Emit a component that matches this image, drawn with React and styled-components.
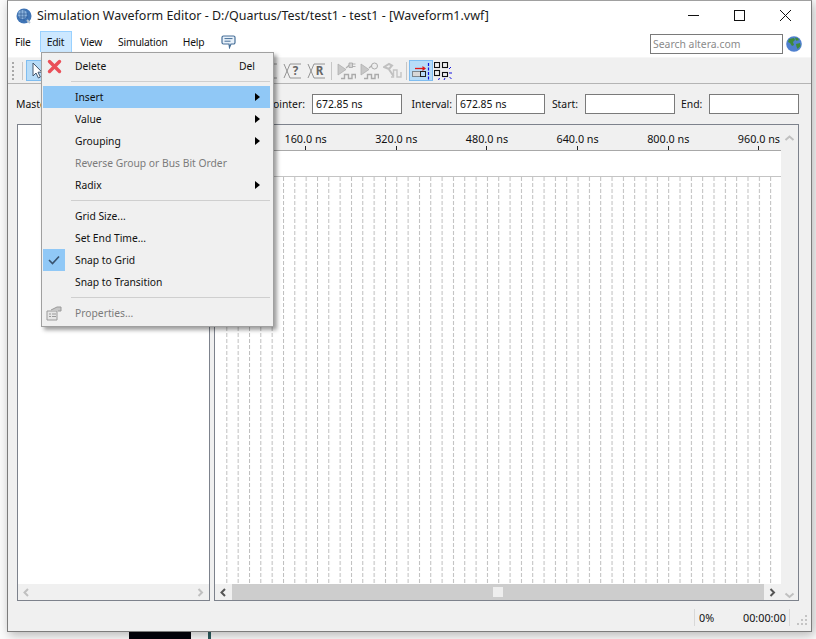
import React from "react";
import styled, { createGlobalStyle } from "styled-components";

const FONT = `"Noto Sans", "Open Sans", sans-serif`;

const GlobalStyle = createGlobalStyle`
  html, body {
    margin: 0;
    padding: 0;
    background: #fff;
  }
  body {
    font-family: ${FONT};
    overflow: hidden;
  }
`;

const Desktop = styled.div`
  position: relative;
  width: 816px;
  height: 639px;
  overflow: hidden;
  background: #fbfbfb;
`;

// bits of other windows peeking out below the editor
const BlackStrip = styled.div`
  position: absolute;
  left: 129px;
  top: 631px;
  width: 62px;
  height: 8px;
  background: #04040c;
`;
const TealLine = styled.div`
  position: absolute;
  left: 208px;
  top: 631px;
  width: 3px;
  height: 8px;
  background: #2c5c5e;
`;

const Window = styled.div`
  position: relative;
  box-sizing: border-box;
  margin-left: 7px;
  width: 805px;
  height: 632px;
  display: flex;
  flex-direction: column;
  background: #f0f0f0;
  border: 1px solid #7c7c7c;
  border-top-color: #a0a0a0;
  box-shadow: 2px 3px 10px rgba(0, 0, 0, 0.28);
`;

const TitleBar = styled.div`
  height: 29px;
  display: flex;
  align-items: center;
  padding: 0 3px 0 8px;
  background: #fff;
  flex: none;
`;

const Title = styled.div`
  margin-left: 5px;
  font-size: 12.47px;
  color: #1a1a1a;
  white-space: nowrap;
  flex: 1;
`;

const WinButton = styled.div`
  width: 46px;
  height: 29px;
  display: flex;
  align-items: center;
  justify-content: center;
  flex: none;
`;

const MenuBar = styled.div`
  height: 26px;
  flex: none;
  display: flex;
  align-items: flex-start;
  background: #fff;
  border-bottom: 1px solid #f6f6f6;
  padding: 1px 0 0 0;
  font-size: 10.3px;
  letter-spacing: -0.2px;
  color: #111;
`;

const MenuTitle = styled.div`
  box-sizing: border-box;
  height: 21px;
  display: flex;
  align-items: center;
  margin-left: ${(p) => p.$left}px;
  padding: 0 ${(p) => (p.$open ? 7 : 0)}px 0 ${(p) => (p.$open ? 6 : 0)}px;
  background: ${(p) => (p.$open ? "#cce8ff" : "transparent")};
  border: ${(p) => (p.$open ? "1px solid #99d1ff" : "none")};
  border-bottom: none;
`;

const SearchArea = styled.div`
  margin-left: auto;
  display: flex;
  align-items: center;
  gap: 3px;
  margin-top: 3px;
  padding-right: 9px;
  letter-spacing: 0;
`;

const SearchBox = styled.div`
  box-sizing: border-box;
  width: 133px;
  height: 20px;
  border: 1px solid #7a7a7a;
  background: #fff;
  color: #8a8a8a;
  font-size: 10.4px;
  line-height: 18px;
  padding-left: 2px;
`;

const Toolbar = styled.div`
  height: 25px;
  flex: none;
  display: flex;
  align-items: center;
  padding-left: 4px;
  border-bottom: 1px solid #b4b4b4;
`;

const Grip = styled.div`
  width: 2px;
  height: 18px;
  margin-right: 5px;
  background: repeating-linear-gradient(to bottom, #a8a8a8 0 2px, transparent 2px 4px);
`;

const ToolSep = styled.div`
  width: 1px;
  height: 18px;
  background: #c6c6c6;
  margin: 0 ${(p) => p.$gap || 3}px;
  flex: none;
`;

const ToolButton = styled.div`
  box-sizing: border-box;
  width: ${(p) => p.$w || 23}px;
  height: 21px;
  flex: none;
  display: flex;
  align-items: center;
  justify-content: center;
  background: ${(p) => (p.$on ? "#b7dcf8" : "transparent")};
  border: 1px solid ${(p) => (p.$on ? "#7fbdf0" : "transparent")};
`;

const FieldRow = styled.div`
  height: 40px;
  flex: none;
  display: flex;
  align-items: center;
  padding-left: 8px;
  font-size: 10.4px;
  color: #111;
`;

const FieldLabel = styled.span`
  width: ${(p) => p.$w}px;
  flex: none;
  margin-left: ${(p) => p.$gap || 0}px;
  margin-right: ${(p) => p.$after || 7}px;
  white-space: nowrap;
  text-align: right;
`;

const MasterLabel = styled(FieldLabel)`
  text-align: left;
`;

const FieldBox = styled.div`
  box-sizing: border-box;
  width: ${(p) => p.$w}px;
  height: 20px;
  flex: none;
  border: 1px solid #7a7a7a;
  background: #fff;
  line-height: 19px;
  padding-left: 3px;
`;

const Panes = styled.div`
  flex: none;
  height: 477px;
  display: flex;
  gap: 4px;
  padding: 0 12px 0 9px;
`;

const NamePane = styled.div`
  box-sizing: border-box;
  width: 193px;
  display: flex;
  flex-direction: column;
  border: 1px solid #7d828c;
  background: #fff;
`;

const PaneBody = styled.div`
  flex: 1;
`;

const HScroll = styled.div`
  height: 16px;
  flex: none;
  display: flex;
  align-items: center;
  justify-content: space-between;
  background: #f0f0f0;
`;

const ScrollButton = styled.div`
  width: 17px;
  height: 16px;
  flex: none;
  display: flex;
  align-items: center;
  justify-content: center;
  background: #f0f0f0;
`;

const Track = styled.div`
  flex: 1;
  height: 16px;
  background: #cdcdcd;
  display: flex;
  align-items: center;
  justify-content: center;
`;

const Thumb = styled.div`
  width: 10px;
  height: 10px;
  margin-left: -1px;
  background: #eeeeee;
`;

const WavePane = styled.div`
  box-sizing: border-box;
  flex: 1;
  display: flex;
  border: 1px solid #7d828c;
  background: #fff;
  min-width: 0;
`;

const WaveMain = styled.div`
  flex: 1;
  min-width: 0;
  display: flex;
  flex-direction: column;
`;

const VScroll = styled.div`
  width: 17px;
  flex: none;
  display: flex;
  flex-direction: column;
  align-items: center;
  justify-content: space-between;
  background: #f0f0f0;
  padding: 8px 0 0;
  box-sizing: border-box;
`;

const Ruler = styled.div`
  height: 26px;
  flex: none;
  display: flex;
  overflow: hidden;
  box-sizing: border-box;
  padding-left: 45.3px;
  background: #f0f0f0;
  border-bottom: 1px solid #a8a8a8;
`;

const RulerCell = styled.div`
  width: 90.67px;
  flex: none;
  display: flex;
  flex-direction: column;
  align-items: center;
  justify-content: flex-end;
  font-size: 10.8px;
  line-height: 14px;
  color: #111;
  white-space: nowrap;
  &::after {
    content: "";
    width: 1px;
    height: 4px;
    background: #222;
  }
`;

const WaveHead = styled.div`
  height: 26px;
  flex: none;
  box-sizing: border-box;
  background: #fff;
  border-bottom: 1px solid #c4c4c4;
`;

const GridArea = styled.div`
  flex: 1;
  min-height: 0;
  overflow: hidden;
`;

const StatusBar = styled.div`
  flex: 1;
  display: flex;
  align-items: center;
  justify-content: flex-end;
  font-size: 10.8px;
  color: #111;
  padding-top: 2px;
`;

const StatusCell = styled.div`
  box-sizing: border-box;
  height: 17px;
  line-height: 17px;
  width: ${(p) => p.$w}px;
  padding-left: ${(p) => p.$pad}px;
  border-left: ${(p) => (p.$sep ? "1px solid #d8d8d8" : "none")};
  border-right: ${(p) => (p.$end ? "1px solid #d8d8d8" : "none")};
  white-space: nowrap;
`;

const SizeGrip = styled.svg`
  width: 21px;
  height: 17px;
  flex: none;
  margin-top: 6px;
`;

const Menu = styled.div`
  position: absolute;
  left: 33px;
  top: 51px;
  box-sizing: border-box;
  width: 233px;
  height: 275px;
  padding: 2px 3px 0 1px;
  background: #f0f0f0;
  border: 1px solid #a0a0a0;
  box-shadow: 3px 3px 4px rgba(0, 0, 0, 0.38);
  font-size: 10.3px;
  z-index: 5;
`;

const Row = styled.div`
  height: 22px;
  display: flex;
  align-items: center;
  background: ${(p) => (p.$active ? "#90c8f6" : "transparent")};
  color: ${(p) => (p.$disabled ? "#7b7b7b" : "#111")};
`;

const RowIcon = styled.div`
  width: 22px;
  height: 22px;
  flex: none;
  margin-right: 10px;
  display: flex;
  align-items: center;
  justify-content: center;
  background: ${(p) => (p.$checked ? "#90c8f6" : "transparent")};
`;

const RowText = styled.div`
  flex: 1;
  white-space: nowrap;
`;

const RowKey = styled.div`
  margin-right: 15px;
`;

const RowArrow = styled.div`
  width: 0;
  height: 0;
  margin-right: 10px;
  border-left: 5px solid #000;
  border-top: 4px solid transparent;
  border-bottom: 4px solid transparent;
`;

const MenuSep = styled.div`
  height: 1px;
  margin: 4px 0 4px 28px;
  background: #cfcfcf;
`;

const AppIcon = () => (
  <svg width="16" height="16" viewBox="0 0 16 16">
    <circle cx="8" cy="8" r="7.5" fill="#3f74b5" />
    <circle cx="6.5" cy="6.5" r="4.5" fill="#8db4de" />
    <path d="M2 6h10M2 9h10M5 2v10M8 2v11" stroke="#2f5a94" strokeWidth="0.7" />
    <path d="M11 12l3 3" stroke="#b8c4d0" strokeWidth="2" />
  </svg>
);

const Globe = () => (
  <svg width="16" height="16" viewBox="0 0 16 16">
    <circle cx="8" cy="8" r="7.8" fill="#4f80cf" />
    <path d="M3 3l5-1 1 2-2 2 1 3-2 1-2-3-2-1z" fill="#3f8a3a" />
    <path d="M10 8l4-1 .6 3-3 3-1-2z" fill="#3f8a3a" />
    <path d="M9 1.5l3 .8 1 2-3 .4z" fill="#3f8a3a" />
  </svg>
);

const Chevron = ({ dir, color = "#c0c0c0" }) => {
  const paths = {
    left: "M6 2L2.5 5.5 6 9",
    right: "M2.5 2L6 5.5 2.5 9",
    up: "M1.5 7L5.5 3.5 9.5 7",
    down: "M1.5 3.5L5.5 7 9.5 3.5",
  };
  const horizontal = dir === "left" || dir === "right";
  return (
    <svg width={horizontal ? 9 : 11} height={horizontal ? 11 : 10} viewBox={horizontal ? "0 0 9 11" : "0 0 11 10"}>
      <path d={paths[dir]} fill="none" stroke={color} strokeWidth="2" />
    </svg>
  );
};

const ValueIcon = ({ letter }) => (
  <svg width="19" height="18" viewBox="0 0 19 18">
    <path d="M1 2l6 14M1 16L7 2M7 2h11M7 16h11" fill="none" stroke="#8a8a8a" strokeWidth="0.9" />
    {letter && (
      <text x="12.5" y="13.4" textAnchor="middle" fontFamily={FONT} fontWeight="700" fontSize="11.5" fill="#666">
        {letter}
      </text>
    )}
  </svg>
);

const SimIcon = ({ mark }) => (
  <svg width="19" height="18" viewBox="0 0 19 18">
    <path d="M1 2v11l8-5.5z" fill="#c8c8c8" stroke="#aaa" strokeWidth="0.7" />
    <path d="M9 6l4-3.5" stroke="#b0b0b0" strokeWidth="1.2" />
    {mark === "plug" && <path d="M12 1h3.5v4.5H12zM15.5 2h3M15.5 4.5h3" fill="#d4d4d4" stroke="#a4a4a4" strokeWidth="0.8" />}
    {mark === "clock" && <circle cx="14.5" cy="4" r="3" fill="#eee" stroke="#a4a4a4" strokeWidth="0.9" />}
    <path d="M4 16.5h3.5v-4h4v4h3.5v-4h3.5v4" fill="none" stroke="#aaa" strokeWidth="1.4" />
  </svg>
);

const HammerIcon = () => (
  <svg width="19" height="18" viewBox="0 0 19 18">
    <path d="M1 5l5-3 3 1.5-3 3.5zM5 6l5.5 8" fill="none" stroke="#c0c0c0" strokeWidth="2" />
    <path d="M8 15h2.5V8H14v7h4V10" fill="none" stroke="#c4c4c4" strokeWidth="1.4" />
  </svg>
);

const SnapIcon = () => (
  <svg width="19" height="18" viewBox="0 0 19 18">
    <path d="M3 6.5h10" stroke="#e01818" strokeWidth="1.3" />
    <path d="M10.5 4l3.5 2.5L10.5 9z" fill="#e01818" />
    <rect x="0.5" y="9.5" width="8" height="5" fill="#d8d8d8" stroke="#333" strokeDasharray="1 1" />
    <rect x="8.5" y="9.5" width="5" height="5" fill="none" stroke="#222" />
    <path d="M16.5 1v17" stroke="#1414e0" strokeWidth="1.2" strokeDasharray="3 1.5" />
  </svg>
);

const ArrangeIcon = () => (
  <svg width="18" height="18" viewBox="0 0 18 18">
    <g fill="none" stroke="#111" strokeWidth="1.1">
      <rect x="0.5" y="0.5" width="5" height="5" />
      <rect x="8.5" y="0.5" width="5" height="5" />
      <rect x="0.5" y="8.5" width="5" height="5" />
      <rect x="8.5" y="10.5" width="5" height="4" />
    </g>
    <path d="M15 7l2-2M15 11h3M15.5 15l2 2M11 16l-1 2M6 16.5l-2 1" stroke="#1414e0" strokeWidth="1" />
  </svg>
);

const CursorIcon = () => (
  <svg width="14" height="18" viewBox="0 0 14 18">
    <path d="M2 1v13l3-3 2.4 5 2-1-2.4-4.8H11z" fill="#fff" stroke="#44566c" strokeWidth="1" />
  </svg>
);

const CommentIcon = () => (
  <svg width="15" height="14" viewBox="0 0 15 14">
    <path d="M2.5 1h10a1.5 1.5 0 0 1 1.5 1.5v5A1.5 1.5 0 0 1 12.5 9H10l-1.5 3.5L8 9H2.5A1.5 1.5 0 0 1 1 7.5v-5A1.5 1.5 0 0 1 2.5 1z" fill="#e8f1fa" stroke="#466f98" strokeWidth="1.2" />
    <path d="M3.5 3.6h8M3.5 6.2h6" stroke="#466f98" strokeWidth="1" />
  </svg>
);

const DeleteIcon = () => (
  <svg width="15" height="15" viewBox="0 0 15 15">
    <path d="M2.5 2.5l10 10M12.5 2.5l-10 10" stroke="#ea4f58" strokeWidth="3.4" strokeLinecap="round" />
  </svg>
);

const PropertiesIcon = () => (
  <svg width="16" height="16" viewBox="0 0 16 16">
    <path d="M1 6h10v9H1z" fill="#e6e6e6" stroke="#9a9a9a" />
    <path d="M3 9h2M6 9h4M3 11.5h2M6 11.5h4" stroke="#9a9a9a" />
    <path d="M5 5l6-3h4v4h-3" fill="#c6c6c6" stroke="#9a9a9a" />
  </svg>
);

// dashed 20 ns grid of the waveform pane
const WaveGrid = () => (
  <svg width="100%" height="100%">
    <defs>
      <pattern id="gridLines" width="11.33" height="6" patternUnits="userSpaceOnUse" x="0">
        <rect x="0" y="0" width="1" height="4" fill="#bdbdbd" />
      </pattern>
    </defs>
    <rect x="10" y="0" width="556" height="100%" fill="url(#gridLines)" />
  </svg>
);

const menuItems = [
  { label: "Delete", icon: <DeleteIcon />, shortcut: "Del" },
  "sep",
  { label: "Insert", sub: true, active: true },
  { label: "Value", sub: true },
  { label: "Grouping", sub: true },
  { label: "Reverse Group or Bus Bit Order", disabled: true },
  { label: "Radix", sub: true },
  "sep",
  { label: "Grid Size..." },
  { label: "Set End Time..." },
  {
    label: "Snap to Grid",
    checked: true,
    icon: (
      <svg width="12" height="10" viewBox="0 0 12 10">
        <path d="M1 5l3.5 3.5L11 1.5" fill="none" stroke="#38526e" strokeWidth="1.6" />
      </svg>
    ),
  },
  { label: "Snap to Transition" },
  "sep",
  { label: "Properties...", icon: <PropertiesIcon />, disabled: true },
];

const rulerLabels = ["160.0 ns", "320.0 ns", "480.0 ns", "640.0 ns", "800.0 ns", "960.0 ns"];
const hiddenTools = [0, 1, 2, 3, 4, 5, 6, 7, 8, 9];

export default function App() {
  return (
    <Desktop>
      <GlobalStyle />
      <BlackStrip />
      <TealLine />
      <Window>
        <TitleBar>
          <AppIcon />
          <Title>Simulation Waveform Editor - D:/Quartus/Test/test1 - test1 - [Waveform1.vwf]</Title>
          <WinButton>
            <svg width="11" height="11"><path d="M0 5.5h11" stroke="#111" /></svg>
          </WinButton>
          <WinButton>
            <svg width="11" height="11"><rect x="0.5" y="0.5" width="10" height="10" fill="none" stroke="#111" /></svg>
          </WinButton>
          <WinButton>
            <svg width="11" height="11"><path d="M0 0l11 11M11 0L0 11" stroke="#111" /></svg>
          </WinButton>
        </TitleBar>

        <MenuBar>
          <MenuTitle $left={7}>File</MenuTitle>
          <MenuTitle $left={9} $open>Edit</MenuTitle>
          <MenuTitle $left={8}>View</MenuTitle>
          <MenuTitle $left={16}>Simulation</MenuTitle>
          <MenuTitle $left={15}>Help</MenuTitle>
          <MenuTitle $left={17}><CommentIcon /></MenuTitle>
          <SearchArea>
            <SearchBox>Search altera.com</SearchBox>
            <Globe />
          </SearchArea>
        </MenuBar>

        <Toolbar>
          <Grip />
          <ToolSep $gap={0} />
          <ToolButton $on $w={24}><CursorIcon /></ToolButton>
          {hiddenTools.map((t) => (
            <ToolButton key={t}><ValueIcon /></ToolButton>
          ))}
          <ToolButton $w={24}><ValueIcon letter="?" /></ToolButton>
          <ToolButton $w={24}><ValueIcon letter="R" /></ToolButton>
          <ToolSep $gap={3} />
          <ToolButton><SimIcon mark="plug" /></ToolButton>
          <ToolButton><SimIcon mark="clock" /></ToolButton>
          <ToolButton><HammerIcon /></ToolButton>
          <ToolSep $gap={2} />
          <ToolButton $on $w={24}><SnapIcon /></ToolButton>
          <ToolButton $w={20}><ArrangeIcon /></ToolButton>
        </Toolbar>

        <FieldRow>
          <MasterLabel $w={72}>Master Time Bar:</MasterLabel>
          <FieldBox $w={145} />
          <FieldLabel $gap={22} $w={43}>Pointer:</FieldLabel>
          <FieldBox $w={90}>672.85 ns</FieldBox>
          <FieldLabel $gap={5} $w={45} $after={4}>Interval:</FieldLabel>
          <FieldBox $w={89}>672.85 ns</FieldBox>
          <FieldLabel $gap={6} $w={27}>Start:</FieldLabel>
          <FieldBox $w={90} />
          <FieldLabel $gap={6} $w={21}>End:</FieldLabel>
          <FieldBox $w={90} />
        </FieldRow>

        <Panes>
          <NamePane>
            <PaneBody />
            <HScroll>
              <ScrollButton><Chevron dir="left" /></ScrollButton>
              <ScrollButton><Chevron dir="right" /></ScrollButton>
            </HScroll>
          </NamePane>
          <WavePane>
            <WaveMain>
              <Ruler>
                {rulerLabels.map((l) => (
                  <RulerCell key={l}>{l}</RulerCell>
                ))}
              </Ruler>
              <WaveHead />
              <GridArea>
                <WaveGrid />
              </GridArea>
              <HScroll>
                <ScrollButton><Chevron dir="left" color="#555" /></ScrollButton>
                <Track><Thumb /></Track>
                <ScrollButton><Chevron dir="right" color="#555" /></ScrollButton>
              </HScroll>
            </WaveMain>
            <VScroll>
              <Chevron dir="up" />
              <Chevron dir="down" />
            </VScroll>
          </WavePane>
        </Panes>

        <StatusBar>
          <StatusCell $w={49} $pad={4} $sep>0%</StatusCell>
          <StatusCell $w={47} $pad={0} $end>00:00:00</StatusCell>
          <SizeGrip viewBox="0 0 21 17">
            <path d="M15 3h2v2h-2zM11 7h2v2h-2zM15 7h2v2h-2zM7 11h2v2H7zM11 11h2v2h-2zM15 11h2v2h-2z" fill="#c4c4c4" />
          </SizeGrip>
        </StatusBar>

        <Menu>
          {menuItems.map((item, i) =>
            item === "sep" ? (
              <MenuSep key={i} />
            ) : (
              <Row key={item.label} $active={item.active} $disabled={item.disabled}>
                <RowIcon $checked={item.checked}>{item.icon}</RowIcon>
                <RowText>{item.label}</RowText>
                {item.shortcut && <RowKey>{item.shortcut}</RowKey>}
                {item.sub && <RowArrow />}
              </Row>
            )
          )}
        </Menu>
      </Window>
    </Desktop>
  );
}
